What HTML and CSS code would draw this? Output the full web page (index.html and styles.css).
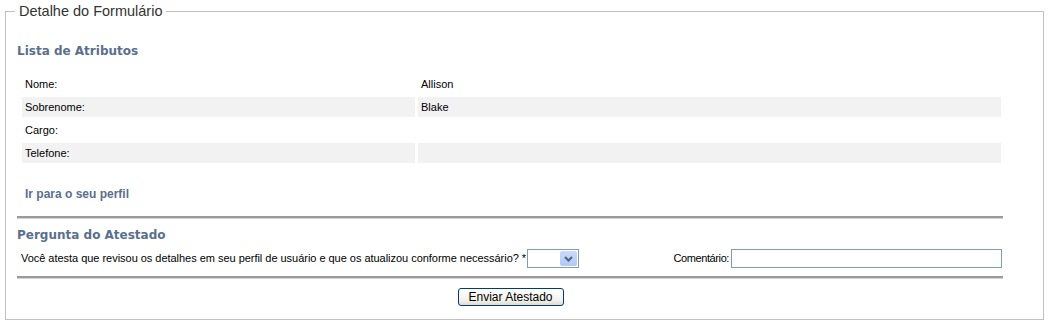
FILE: index.html
```html
<!DOCTYPE html>
<html lang="pt">
<head>
    <meta charset="UTF-8">
    <title>Detalhe do Formulário</title>
    <link rel="stylesheet" href="styles.css">
</head>
<body>

    <fieldset class="form-box">
        <legend>Detalhe do Formulário</legend>

        <!-- Lista de Atributos -->
        <h3 class="section-title first">Lista de Atributos</h3>
        <table class="attr-table">
            <tr>
                <td class="attr-name">Nome:</td>
                <td>Allison</td>
            </tr>
            <tr class="alt">
                <td class="attr-name">Sobrenome:</td>
                <td>Blake</td>
            </tr>
            <tr>
                <td class="attr-name">Cargo:</td>
                <td></td>
            </tr>
            <tr class="alt">
                <td class="attr-name">Telefone:</td>
                <td></td>
            </tr>
        </table>

        <a class="profile-link" href="#">Ir para o seu perfil</a>

        <hr class="divider">

        <!-- Pergunta do Atestado -->
        <h3 class="section-title">Pergunta do Atestado</h3>
        <div class="question-row">
            <div class="question">
                <span class="question-text">Você atesta que revisou os detalhes em seu perfil de usuário e que os atualizou conforme necessário? *</span>
                <div class="select-box">
                    <select>
                        <option></option>
                        <option>Sim</option>
                        <option>Não</option>
                    </select>
                    <span class="select-arrow">
                        <svg width="17" height="15" viewBox="0 0 17 15">
                            <path d="M5 6 L8.5 9.5 L12 6" fill="none" stroke="#4d6185" stroke-width="2"/>
                        </svg>
                    </span>
                </div>
            </div>
            <div class="comment">
                <label for="comment">Comentário:</label>
                <input type="text" id="comment">
            </div>
        </div>

        <hr class="divider">

        <div class="actions">
            <button class="button">Enviar Atestado</button>
        </div>
    </fieldset>

</body>
</html>
```

FILE: styles.css
```css
body {
    font-family: "Liberation Sans", Arial, sans-serif;
    font-size: 11px;
    margin: 0;
    padding: 2px 5px 0 5px;
    background-color: #fff;
    color: #000;
}
.form-box {
    margin: 0;
    padding: 0 39px 13px 11px;
    border: 1px solid #c0c0c0;
    min-width: 0;
}
.form-box legend {
    font-size: 14.5px;
    line-height: 18px;
    color: #333;
    padding: 0 4px;
    margin-left: -2px;
}
.section-title {
    font-family: "DejaVu Sans", Verdana, sans-serif;
    font-size: 12px;
    line-height: 16px;
    font-weight: bold;
    color: #5a6f8d;
    margin: 8px 0 0 0;
}
.section-title.first {
    margin-top: 23px;
}
.attr-table {
    margin: 12px 0 0 2px;
    width: calc(100% - 2px);
    border-spacing: 3px;
    border-collapse: separate;
}
.attr-table td {
    height: 20px;
    padding: 0 3px;
    vertical-align: middle;
}
.attr-table .attr-name {
    width: 387px;
}
.attr-table tr.alt td {
    background-color: #f2f2f2;
}
.profile-link {
    display: block;
    margin: 20px 0 0 8px;
    font-size: 12px;
    line-height: 16px;
    font-weight: bold;
    color: #5a6f8d;
    text-decoration: none;
}
.divider {
    margin: 14px 1px 0 0;
    height: 0;
    border: none;
    border-top: 2px solid #9a9a9a;
    border-bottom: 1px solid #d4d4d4;
}
.question-row {
    display: flex;
    justify-content: space-between;
    align-items: center;
    margin: 5px 2px 0 4px;
    height: 20px;
}
.question-row + .divider {
    margin-top: 8px;
}
.question {
    display: flex;
    align-items: center;
}
.question-text {
    letter-spacing: -0.03px;
}
.select-box {
    display: flex;
    align-items: center;
    width: 50px;
    height: 17px;
    margin-left: 1px;
    border: 1px solid #7f9db9;
    background-color: #fff;
}
.select-box select {
    flex: 1;
    min-width: 0;
    height: 100%;
    border: none;
    padding: 0;
    background: transparent;
    appearance: none;
    -webkit-appearance: none;
    outline: none;
}
.select-arrow {
    display: block;
    width: 17px;
    height: 15px;
    margin-right: 1px;
    border-radius: 2px;
    background: linear-gradient(#cbdafc, #b4c7f4);
}
.select-arrow svg {
    display: block;
}
.comment {
    display: flex;
    align-items: center;
}
.comment label {
    margin-right: 2px;
    letter-spacing: -0.4px;
}
.comment input {
    width: 267px;
    height: 17px;
    padding: 0 1px;
    border: 1px solid #7f9db9;
    font-family: inherit;
    font-size: 11px;
    outline: none;
}
.actions {
    display: flex;
    justify-content: center;
    margin-top: 9px;
}
.button {
    font-family: "Liberation Sans", Arial, sans-serif;
    font-size: 12px;
    width: 106px;
    height: 18px;
    padding: 0;
    color: #000;
    border: 1px solid #003c74;
    border-radius: 3px;
    background: linear-gradient(#ffffff, #f3f2ec 70%, #dedbcd);
    cursor: pointer;
}
```
